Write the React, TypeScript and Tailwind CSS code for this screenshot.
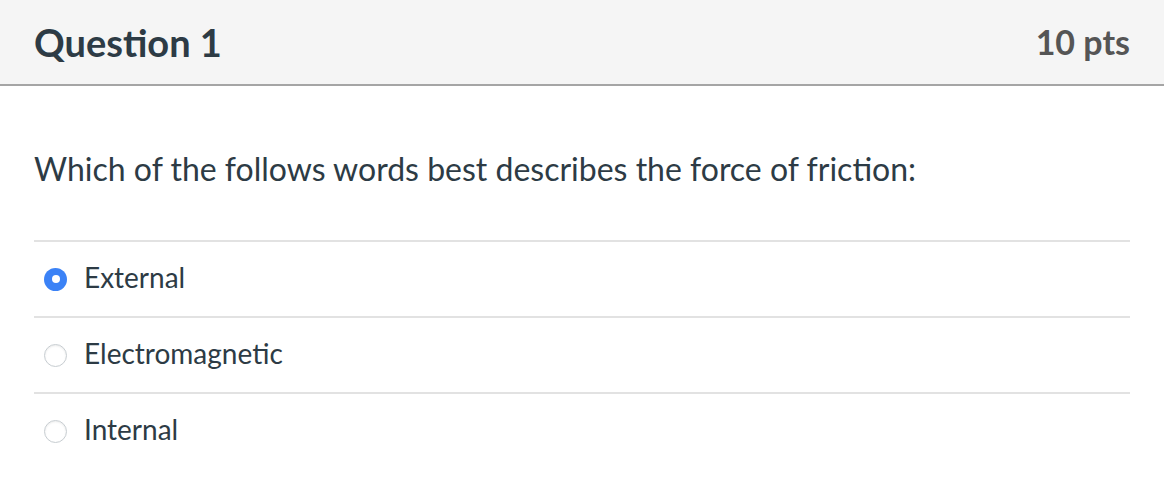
import React from 'react';

const options = [
  { label: 'External', selected: true },
  { label: 'Electromagnetic', selected: false },
  { label: 'Internal', selected: false },
];

const Radio: React.FC<{ selected: boolean }> = ({ selected }) =>
  selected ? (
    <span className="flex h-[23px] w-[23px] items-center justify-center rounded-full bg-[#3b82f6]">
      <span className="h-[8px] w-[8px] rounded-full bg-white" />
    </span>
  ) : (
    <span className="h-[23px] w-[23px] rounded-full border border-[#c7cdd1] bg-white shadow-[inset_0_1px_2px_rgba(0,0,0,0.08)]" />
  );

export default function App() {
  return (
    <div className="w-[1164px] h-[478px] bg-white font-['Lato',sans-serif] text-[#2d3b45]">
      <div className="flex h-[86px] items-center justify-between border-b-2 border-[#a5a5a5] bg-[#f5f5f5] pl-[34px] pr-[34px]">
        <h2 className="text-[38px] font-bold leading-none">Question 1</h2>
        <span className="text-[34px] font-bold leading-none text-[#555]">10 pts</span>
      </div>
      <div className="px-[34px]">
        <p className="pt-[64px] text-[32px] leading-[38px]">
          Which of the follows words best describes the force of friction:
        </p>
        <div className="mt-[52px]">
          {options.map((o) => (
            <div key={o.label} className="flex h-[76px] items-center gap-[17px] border-t-2 border-[#e2e2e2] pl-[10px]">
              <Radio selected={o.selected} />
              <span className="mb-[5px] text-[28px] leading-[32px]">{o.label}</span>
            </div>
          ))}
        </div>
      </div>
    </div>
  );
}
